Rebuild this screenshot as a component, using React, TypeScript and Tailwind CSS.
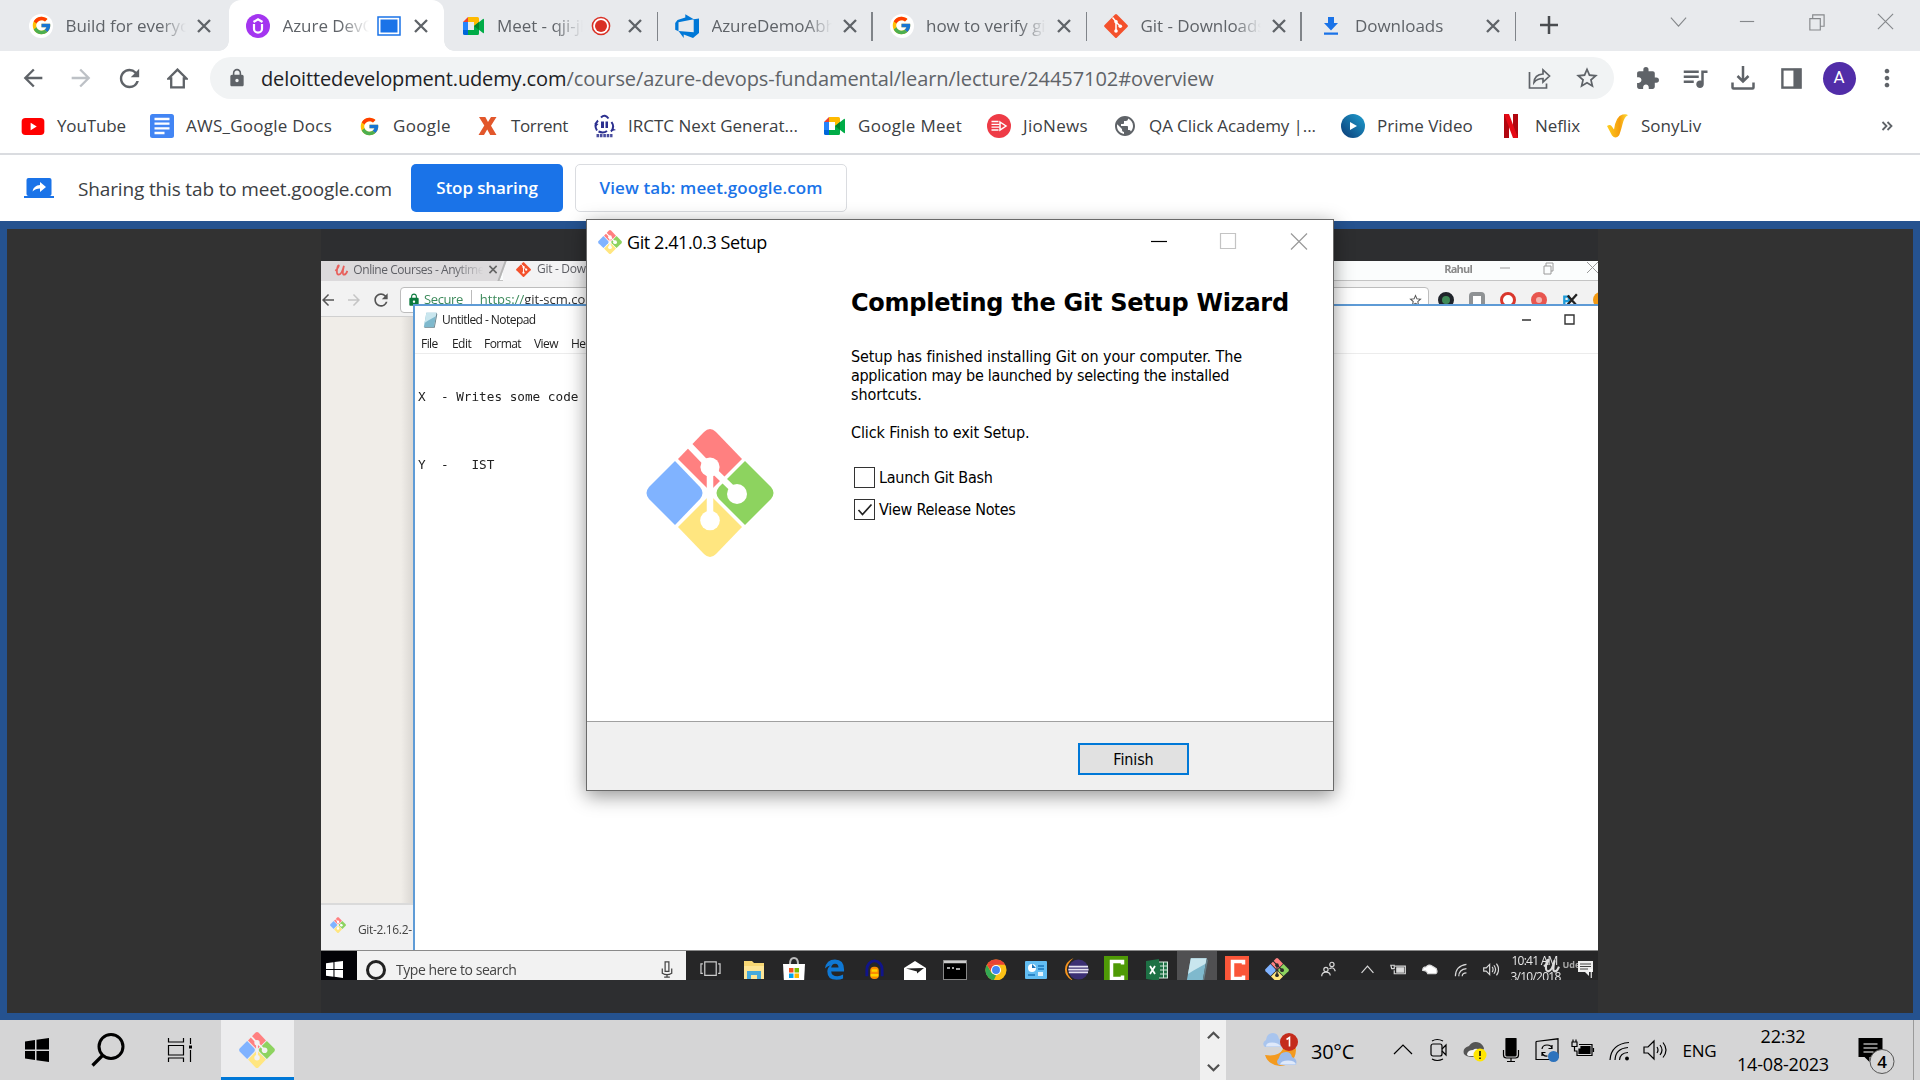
import React from "react";
import { FcGoogle } from "react-icons/fc";
import {
  MdArrowBack, MdArrowForward, MdRefresh, MdLock, MdStarBorder, MdExtension,
  MdQueueMusic, MdPublic, MdMoreVert,
} from "react-icons/md";

type P = { className?: string };

/* ---------- logos ---------- */
const GitSetupLogo = ({ className = "", gap = "#ffffff" }: P & { gap?: string }) => (
  <svg viewBox="0 0 128 128" className={className}>
    <path d="M58 3q6-6 12 0l26 27-32 32L32 30z" fill="#ff8080" />
    <path d="M29 32 3 58q-5 6 0 12l26 26 25-26q5-6 0-12z" fill="#80b3ff" />
    <path d="m99 32 26 26q5 6 0 12L99 96 73 70q-5-6 0-12z" fill="#8dd35f" />
    <path d="M64 66 32 98l26 27q6 6 12 0l26-27z" fill="#ffe680" />
    <path d="m40 13 24 25 27 26M64 38v54" fill="none" stroke={gap} strokeWidth="6.5" />
    <circle cx="64" cy="38" r="9.6" fill={gap} />
    <circle cx="91" cy="65" r="10" fill={gap} />
    <circle cx="64" cy="91.500" r="9.8" fill={gap} />
  </svg>
);
const GitIcon = ({ className = "" }: P) => (
  <svg viewBox="0 0 24 24" className={className}>
    <path d="M11 .6q1-1 2 0L23.400 11q1 1 0 2L13 23.400q-1 1-2 0L.6 13q-1-1 0-2z" fill="#f4512c" />
    <path d="m8.500 3.500 3.500 4v10M12 8l4 4" stroke="#fff" strokeWidth="1.500" fill="none" />
    <circle cx="12" cy="7.800" r="1.800" fill="#fff" /><circle cx="12" cy="17" r="1.800" fill="#fff" /><circle cx="16.300" cy="12.300" r="1.800" fill="#fff" />
  </svg>
);
const MeetIcon = () => (
  <svg viewBox="0 0 24 20" className="h-5 w-6">
    <path d="M7 1v5H2z" fill="#ea4335" /><path d="M7 1h9.500q1.500 0 1.500 1.500V8l-5 2V6H7z" fill="#ffba00" />
    <path d="M2 6h5v8H2z" fill="#2684fc" /><path d="M2 14h5v5H3.500Q2 19 2 17.500z" fill="#0066da" />
    <path d="M7 14h6v-4l5-1v8.500q0 1.500-1.500 1.500H7z" fill="#00ac47" />
    <path d="M13 10l9-7q1-.6 1 .6v12.800q0 1.200-1 .6z" fill="#00ac47" />
    <path d="M13 10 18 6v8z" fill="#00832d" />
  </svg>
);
const UdemyIcon = () => (
  <svg viewBox="0 0 24 24" className="size-6">
    <circle cx="12" cy="12" r="12" fill="#a435f0" />
    <path d="M8 10v5a4 3.600 0 0 0 8 0v-5M7.500 8 12 5.300 16.500 8" fill="none" stroke="#fff" strokeWidth="2.200" />
  </svg>
);
const AzureIcon = () => (
  <svg viewBox="0 0 24 24" className="size-6">
    <path d="M24 4.500v14.600L18 24l-9.300-3.400V24l-5.200-6.900 15.200 1.200V5.200zM18.800 5.300 10.300.3v3.300L2.500 5.900.2 8.900v6.800l3.300 1.500V8.300z" fill="#0078d7" />
  </svg>
);
const DownloadFav = () => (
  <svg viewBox="0 0 24 24" className="size-6">
    <path d="M9 3h6v6h4l-7 7.500L5 9h4zM5 18.500h14v2.200H5z" fill="#1a73e8" />
  </svg>
);
const GoogleRound = () => (
  <span className="flex size-6 items-center justify-center rounded-full bg-white"><FcGoogle className="size-[21px]" /></span>
);
const YoutubeIcon = () => (
  <svg viewBox="0 0 24 18" className="h-[17px] w-6"><rect width="24" height="18" rx="4" fill="#f00" /><path d="m9.500 5 6.500 4-6.500 4z" fill="#fff" /></svg>
);
const DocsIcon = () => (
  <svg viewBox="0 0 24 24" className="size-6"><rect width="24" height="24" rx="2.500" fill="#4285f4" /><path d="M4.500 5h15M4.500 9.700h15M4.500 14.400h15M4.500 19h10" stroke="#fff" strokeWidth="2.300" /></svg>
);
const TorrentIcon = () => (
  <svg viewBox="0 0 24 24" className="size-6"><path d="M4 3h6.300l2.700 5 3-5h5.500l-5.500 8.800L21.500 21h-6.300l-3-5.500L9 21H3.500l5.800-9.500z" fill="#e2572b" /></svg>
);
const IrctcIcon = () => (
  <svg viewBox="0 0 24 24" className="size-6">
    <path d="M9 3.500q4-4 7.500 1M6 6.500Q1.500 11 5 16.500M19.500 8q3.500 5-.5 9.500M6.500 17.500q5 2 8.500-.5" fill="none" stroke="#2b2f8f" strokeWidth="2" />
    <path d="M4 12.500 2.500 9l4 1zM20 17l4-1-4-2z" fill="#2b2f8f" />
    <path d="M9 7.500h3v6.500H9zM13.500 7.500H16v6.500h-2.500z" fill="#2b2f8f" />
    <path d="M4.500 21.700h16" stroke="#2b2f8f" strokeWidth="3.200" strokeDasharray="2.600 .8" opacity=".85" />
  </svg>
);
const JioIcon = () => (
  <svg viewBox="0 0 24 24" className="size-6"><circle cx="12" cy="12" r="12" fill="#ee3b46" /><path d="M4.500 7.500h7M4.500 10.300h8M4.500 13.200h8M4.500 16h7" stroke="#fff" strokeWidth="1.300" /><path d="m13 8 6 4-6 4z" fill="none" stroke="#fff" strokeWidth="1.500" /></svg>
);
const PrimeIcon = () => (
  <svg viewBox="0 0 24 24" className="size-6">
    <defs><linearGradient id="pv" x1="1" y1="0" x2="0" y2="1"><stop offset="0" stopColor="#1f9fd0" /><stop offset="1" stopColor="#0b3a75" /></linearGradient></defs>
    <circle cx="12" cy="12" r="12" fill="url(#pv)" /><path d="m9 8 7 4-7 4z" fill="#fff" />
  </svg>
);
const NetflixIcon = () => (
  <svg viewBox="0 0 24 24" className="size-6"><path d="M5 0h5v24H5zM14 0h5v24h-5z" fill="#b1060f" /><path d="M5 0h5l9 24h-5z" fill="#e50914" /></svg>
);
const SonyIcon = () => (
  <svg viewBox="0 0 24 24" className="size-6">
    <defs><linearGradient id="sl" x1="0" y1="0" x2="1" y2="0"><stop offset="0" stopColor="#ffcf1f" /><stop offset=".6" stopColor="#f59d0c" /><stop offset="1" stopColor="#ffe23a" /></linearGradient></defs>
    <path d="M2 12q3-2 4.500 0l2.500 3.500Q11 2 17.500.5q4.500-.8 5.500.7-3.500 1-5.500 9T14 21.500q-3.500 4-7 0z" fill="url(#sl)" />
  </svg>
);

/* ---------- browser chrome ---------- */
const CloseX = () => (
  <svg viewBox="0 0 18 18" className="size-[18px] shrink-0"><path d="m3 3 12 12M15 3 3 15" stroke="#5f6368" strokeWidth="2.300" /></svg>
);
const TabSharing = () => (
  <svg viewBox="0 0 24 20" className="h-5 w-6 shrink-0"><rect x="1" y="1" width="22" height="18" fill="#fff" stroke="#1a73e8" strokeWidth="1.500" /><rect x="3.500" y="3.500" width="17" height="13" fill="#1a73e8" /></svg>
);
const Recording = () => (
  <svg viewBox="0 0 20 20" className="mr-1 size-5 shrink-0"><circle cx="10" cy="10" r="8.600" fill="#fff" stroke="#d93025" strokeWidth="1.500" /><circle cx="10" cy="10" r="6" fill="#d93025" /></svg>
);

type TabT = { icon: React.ReactNode; title: string; active?: boolean; media?: React.ReactNode; sep?: boolean };
const tabs: TabT[] = [
  { icon: <GoogleRound />, title: "Build for everyone" },
  { icon: <UdemyIcon />, title: "Azure DevOps", active: true, media: <TabSharing /> },
  { icon: <MeetIcon />, title: "Meet - qji-jhqn", media: <Recording />, sep: true },
  { icon: <AzureIcon />, title: "AzureDemoAbhi", sep: true },
  { icon: <GoogleRound />, title: "how to verify git", sep: true },
  { icon: <GitIcon className="size-6" />, title: "Git - Downloads", sep: true },
  { icon: <DownloadFav />, title: "Downloads", sep: true },
];

function Tab({ icon, title, active, media, sep }: TabT) {
  return (
    <div className={"relative flex h-[51px] w-[214.500px] shrink-0 items-center first:w-[216px] first:pl-4 pl-[17px] " + (active ? "rounded-t-[12px] bg-white" : "")}>
      {active && (
        <>
          <span className="absolute bottom-0 -left-[10px] size-[10px] bg-[radial-gradient(circle_at_0_0,transparent_9.500px,white_10px)]" />
          <span className="absolute -right-[10px] bottom-0 size-[10px] bg-[radial-gradient(circle_at_100%_0,transparent_9.500px,white_10px)]" />
        </>
      )}
      <span className="flex w-6 shrink-0 justify-center">{icon}</span>
      <span className={
        "ml-[12.500px] shrink-0 overflow-hidden text-[17px] leading-6 tracking-[-0.05px] whitespace-nowrap text-[#5f6368] " +
        (media ? "w-[86px] [mask-image:linear-gradient(to_right,black_66%,transparent)]" : "w-[120px] [mask-image:linear-gradient(to_right,black_78%,transparent)]")
      }>{title}</span>
      {media && <span className="ml-[8px] flex w-6 shrink-0 justify-center">{media}</span>}
      <span className={media ? "ml-[11px]" : "ml-[9px]"}><CloseX /></span>
      {sep && <span className="absolute top-3 right-0 h-[29px] w-[1.500px] bg-[#808489]" />}
    </div>
  );
}

function TabStrip() {
  return (
    <div className="flex h-[51px] shrink-0 bg-[#e8eaed] pl-[13px]">
      {tabs.map((t) => <Tab key={t.title} {...t} />)}
      <svg viewBox="0 0 20 20" className="mt-[15px] ml-[23px] size-5"><path d="M10 1v18M1 10h18" stroke="#494c50" strokeWidth="2.500" /></svg>
      <div className="ml-auto flex h-[43px] w-[276px] items-center">
        {["m2 6 8 9 8-9", "M2 10h15", "M3 7h11v12H3zM6 7V3h12v12h-4", "m2 2 16 16M18 2 2 18"].map((d) => (
          <span key={d} className="flex w-[69px] shrink-0 justify-center">
            <svg viewBox="0 0 20 20" className="size-[19px]"><path d={d} stroke="#85888b" strokeWidth="1.200" fill="none" /></svg>
          </span>
        ))}
      </div>
    </div>
  );
}

const Slot = ({ children }: { children: React.ReactNode }) => (
  <span className="flex w-12 shrink-0 items-center justify-center text-[#5f6368]">{children}</span>
);

function Toolbar() {
  return (
    <div className="flex h-[54px] shrink-0 items-center bg-white pl-[9px]">
      <Slot><MdArrowBack className="size-[28px]" /></Slot>
      <Slot><MdArrowForward className="size-[28px] text-[#bdc1c6]" /></Slot>
      <Slot><MdRefresh className="size-[29px]" /></Slot>
      <Slot><svg viewBox="0 0 20 20" className="size-[21px]"><path d="M10 1.500 1.500 10H4v8.500h12V10h2.500z" stroke="#5f6368" strokeWidth="2.200" fill="none" /></svg></Slot>
      <div className="ml-[9px] flex h-[42px] w-[1404px] shrink-0 items-center rounded-full bg-[#f1f3f4] pl-[17px]">
        <MdLock className="size-[20px] text-[#5f6368]" />
        <span className="mt-[2px] ml-[14px] text-[20px] leading-6 tracking-[-0.07px] whitespace-nowrap text-[#5f6368]">
          <span className="tracking-[-0.13px] text-[#202124]">deloittedevelopment.udemy.com</span>/course/azure-devops-fundamental/learn/lecture/24457102#overview
        </span>
        <span className="mr-[3px] ml-auto flex">
          <Slot><svg viewBox="0 0 24 24" className="size-6"><path d="M2.500 6v16h17v-4.500M7 16.500q.5-8 9-8.500V4l6.500 6-6.500 6v-3.500q-6 0-9 4z" stroke="#5f6368" strokeWidth="1.700" fill="none" /></svg></Slot>
          <Slot><MdStarBorder className="size-[26px]" /></Slot>
        </span>
      </div>
      <span className="ml-[9px] flex">
        <Slot><MdExtension className="size-[25px]" /></Slot>
        <Slot><MdQueueMusic className="size-[30px]" /></Slot>
        <Slot><svg viewBox="0 0 24 24" className="size-6"><path d="M12 0v15M6.500 10l5.500 5.500 5.500-5.500M1.500 16.500v5q0 1 1 1h19q1 0 1-1v-5" stroke="#5f6368" strokeWidth="2.500" fill="none" /></svg></Slot>
        <Slot><svg viewBox="0 0 24 24" className="size-[23px]"><rect x="2.500" y="2.500" width="19" height="19" stroke="#5f6368" strokeWidth="2.500" fill="none" /><path d="M14 2h8v20h-8z" fill="#5f6368" /></svg></Slot>
        <Slot><span className="flex size-[33px] items-center justify-center rounded-full bg-[#512da8] font-[Roboto] text-[17px] text-white">A</span></Slot>
        <Slot><MdMoreVert className="size-[28px]" /></Slot>
      </span>
    </div>
  );
}

const bookmarks = [
  { i: <YoutubeIcon />, t: "YouTube", w: "w-[129px]", k: "tracking-[-0.13px]" },
  { i: <DocsIcon />, t: "AWS_Google Docs", w: "w-[207px]", k: "tracking-[0.25px]" },
  { i: <FcGoogle className="size-[21px]" />, t: "Google", w: "w-[118px]", k: "tracking-[0.35px]" },
  { i: <TorrentIcon />, t: "Torrent", w: "w-[117px]", k: "tracking-[-0.36px]" },
  { i: <IrctcIcon />, t: "IRCTC Next Generat...", w: "w-[230px]", k: "" },
  { i: <MeetIcon />, t: "Google Meet", w: "w-[165px]", k: "tracking-[0.3px]" },
  { i: <JioIcon />, t: "JioNews", w: "w-[126px]", k: "tracking-[0.33px]" },
  { i: <MdPublic className="size-[26px] text-[#5f6368]" />, t: "QA Click Academy |...", w: "w-[228px]", k: "tracking-[-0.09px]" },
  { i: <PrimeIcon />, t: "Prime Video", w: "w-[158px]", k: "" },
  { i: <NetflixIcon />, t: "Neflix", w: "w-[106px]", k: "tracking-[-0.09px]" },
  { i: <SonyIcon />, t: "SonyLiv", w: "w-[110px]", k: "" },
];

function Bookmarks() {
  return (
    <div className="flex h-[50px] shrink-0 items-start border-b-2 border-[#dadce0] bg-white pt-[9px] pl-[21px]">
      {bookmarks.map((b) => (
        <div key={b.t} className={"flex h-6 shrink-0 items-center " + b.w}>
          <span className="flex w-6 shrink-0 justify-center">{b.i}</span>
          <span className={"ml-3 text-[17px] leading-6 whitespace-nowrap text-[#3c4043] " + b.k}>{b.t}</span>
        </div>
      ))}
      <svg viewBox="0 0 12 12" className="mt-[6px] mr-[27px] ml-auto size-3"><path d="m1.500 2 4 4-4 4M6.500 2l4 4-4 4" stroke="#5f6368" strokeWidth="1.800" fill="none" /></svg>
    </div>
  );
}

function ShareBar() {
  return (
    <div className="flex h-[66px] shrink-0 items-center bg-white pl-6">
      <svg viewBox="0 0 30 20" className="h-5 w-[30px]"><rect x="2.500" width="25" height="18" rx="2" fill="#1a73e8" /><path d="M0 18h30v2H0z" fill="#1a73e8" /><path d="M8.500 13.500q1-6 7.500-6.500V4l6 5-6 5v-3.500q-4.500 0-7.500 3z" fill="#fff" /></svg>
      <span className="mt-[2px] ml-6 w-[333px] text-[19px] leading-6 tracking-[-0.15px] whitespace-nowrap text-[#3c4043]">Sharing this tab to meet.google.com</span>
      <button className="h-12 w-[152px] shrink-0 rounded-[5px] bg-[#1a73e8] text-[17px] font-semibold tracking-[-0.1px] text-white">Stop sharing</button>
      <button className="ml-3 h-12 w-[272px] shrink-0 rounded-[5px] border border-[#dadce0] text-[17px] font-semibold tracking-[0.09px] text-[#1a73e8]">View tab: meet.google.com</button>
    </div>
  );
}

/* ---------- shared lecture video ---------- */
const NotepadIcon = ({ className = "" }: P) => (
  <svg viewBox="0 0 22 22" className={className}><path d="M6 1h14l-3.500 19.500H2.500z" fill="#7fb9cd" /><path d="M6 1h14l-1 5L8 12l-4.500 3z" fill="#c9e6ee" /><path d="m20 1 1 2-3.500 18.500H4l-1.500-1h14z" fill="#66808a" /></svg>
);
const Camtasia = ({ fill }: { fill: string }) => (
  <svg viewBox="0 0 24 28" className="h-[28px] w-6"><rect width="24" height="28" fill={fill} /><path d="M18.500 8.500V5.500h-11v17h11v-3" stroke="#fff" strokeWidth="3.500" fill="none" /></svg>
);
const UdemyMark = ({ className = "", color }: P & { color: string }) => (
  <svg viewBox="0 0 16 14" className={className}><path d="M1 8Q5 4 5 1.800 3.500 1 2.800 8 2.500 12.500 5 12.500 8.500 12 11 2 8.500 12.500 11 12.500q2.500 0 4-4.500" stroke={color} strokeWidth="2" fill="none" /></svg>
);

const videoApps: { n: string; i: React.ReactNode; on?: boolean }[] = [
  { n: "explorer", i: <svg viewBox="0 0 22 20" className="w-[22px]"><path d="M1 1h8l2 2h10v16H1z" fill="#f7d774" /><path d="M1 6h20v13H1z" fill="#fde596" /><path d="M4 19v-8h14v8h-4v-4H8v4z" fill="#45a9dc" /></svg> },
  { n: "store", i: <svg viewBox="0 0 24 26" className="w-6"><path d="M8 7q0-6 4-6t4 6" stroke="#bbb" strokeWidth="2" fill="none" /><path d="M1 7h22l-1 18H2z" fill="#fff" /><path d="M7 11h4.500v4.500H7z" fill="#f25022" /><path d="M12.500 11H17v4.500h-4.500z" fill="#7fba00" /><path d="M7 16.500h4.500V21H7z" fill="#00a4ef" /><path d="M12.500 16.500H17V21h-4.500z" fill="#ffb900" /></svg> },
  { n: "edge", i: <svg viewBox="0 0 22 22" className="w-[21px]"><path d="M1 10Q2.500.5 11.500.5 21 .5 21 11v2H7.500q.5 5 6.500 5 3 0 6-1.700v4Q17.500 21.700 13 21.700 3.500 21.700 3.500 13 3.500 9 7 6.500 3.500 7.500 1 10zM7.500 9h7.700q0-4-3.600-4-3.400 0-4.100 4z" fill="#0f78d4" /></svg> },
  { n: "audacity", i: <svg viewBox="0 0 22 22" className="w-[21px]"><path d="M3 18v-7a8 9 0 0 1 16 0v7" stroke="#10148a" strokeWidth="3" fill="none" /><rect x="6.500" y="8" width="9" height="13" rx="4" fill="#fb8c00" /><path d="M8 12h6M7 17h8" stroke="#ffd400" strokeWidth="2.500" /></svg> },
  { n: "mail", i: <svg viewBox="0 0 24 20" className="w-6"><path d="M1 8 12 1l11 7v12H1z" fill="#fff" /><path d="m3 8.500 18-.5-7 5.500v-2z" fill="#222" /></svg> },
  { n: "cmd", i: <svg viewBox="0 0 24 20" className="w-6"><rect x=".5" y=".5" width="23" height="19" fill="#000" stroke="#888" /><path d="M1 2h22" stroke="#ccc" strokeWidth="2.500" /><path d="M4 8h3M9 8h2M13 9h4" stroke="#ddd" strokeWidth="1.300" /></svg> },
  { n: "chrome", i: <svg viewBox="0 0 24 24" className="w-[22px]"><circle cx="12" cy="12" r="11.500" fill="#fbc116" /><path d="M2 6.200A11.500 11.500 0 0 1 22 6.300H12z" fill="#ea4335" /><path d="M2 6.200 7 15l5 3-2.500 5.300A11.500 11.500 0 0 1 2 6.200z" fill="#34a853" /><path d="M2 6.200 12 6l-5 8z" fill="#ea4335" /><circle cx="12" cy="12" r="5.500" fill="#fff" /><circle cx="12" cy="12" r="4.300" fill="#4285f4" /></svg> },
  { n: "panel", i: <svg viewBox="0 0 22 18" className="w-[22px]"><rect width="22" height="18" rx="1" fill="#62bdf2" /><circle cx="7" cy="7" r="4" fill="#fff" /><path d="M7 3v4h4z" fill="#1b75bb" /><path d="M13 5h6M13 8h6M3 14h7" stroke="#1b75bb" strokeWidth="1.500" /><path d="M13 11h5v4h-5z" fill="#e3f3fc" /></svg> },
  { n: "eclipse", i: <svg viewBox="0 0 26 24" className="w-[25px]"><path d="M10 0Q1 4 1 12t9 12Q3 18 3 12t7-12z" fill="#f7941e" /><circle cx="15" cy="12" r="10.500" fill="#3b2f73" /><path d="M5 9h20M4.500 12h21M5 15h20" stroke="#e6e2f2" strokeWidth="1.800" /></svg> },
  { n: "camtasia", i: <Camtasia fill="#4f9a06" /> },
  { n: "excel", i: <svg viewBox="0 0 22 22" className="w-[22px]"><path d="M0 2 13 0v22L0 20z" fill="#1e7145" /><path d="M13 3h8.500v16H13" stroke="#d5e8dc" fill="#1e7145" strokeWidth="1.200" /><path d="M14 7h7M14 11h7M14 15h7M17.500 3v16" stroke="#d5e8dc" /><path d="m4 7 5 8M9 7l-5 8" stroke="#fff" strokeWidth="1.800" /></svg> },
  { n: "notepad", i: <NotepadIcon className="w-[25px]" />, on: true },
  { n: "recorder", i: <Camtasia fill="#fa5639" /> },
  { n: "git", i: <GitSetupLogo className="w-[24px]" gap="#2a2a2a" /> },
];

const videoTray: [string, React.ReactNode, string][] = [
  ["people", <g key="g"><circle cx="14" cy="4" r="2.500" /><circle cx="7" cy="10" r="2.500" /><path d="M2 18q0-5 5-5t5 4M11 9q5-3 7 3" /></g>, "w-[54px] pl-[8px]"],
  ["caret", <path key="g" d="m3 14 7-8 7 8" />, "w-[31px]"],
  ["power", <g key="g"><path d="M6 6h12v9H5v-4M1 5h4v4H2z" /><path d="M8 8h8v5H8z" fill="#ddd" /></g>, "w-[31px]"],
  ["cloud", <path key="g" d="M2 11q0-4 4-4 3-4 7-1l5 3q2 5-1 6H8q-1-4-6-4z" fill="#fff" />, "w-[31px]"],
  ["wifi", <path key="g" d="M4 18Q4 6 17 4M8 18q0-8 9-9M12 18q0-4 5-4" />, "w-[31px]"],
  ["sound", <path key="g" d="M2 8h3l4-4v12l-4-4H2zM12 7q2 3 0 6M14 5q4 5 0 10M17 3q5 7 0 14" />, "w-[35px] pr-[6px]"],
];

function Video() {
  return (
    <div className="relative flex h-[719px] w-[1277px] flex-col overflow-hidden bg-[#f0eeea] font-medium blur-[0.4px]">
      <div className="flex h-[20px] shrink-0 items-center border-b border-[#c4c4c4] bg-[#fbfdfd] text-[12px] text-[#5f6066]">
        <div className="-ml-1 flex h-5 w-[186px] shrink-0 -skew-x-[20deg] items-center border-r-2 border-[#b5b5b5] bg-[#dcdadc] pb-[3px] pl-[17px]">
          <UdemyMark className="h-3 w-3.5 skew-x-[20deg]" color="#e8605c" />
          <span className="ml-[5px] w-[134px] skew-x-[20deg] overflow-hidden tracking-[-0.45px] whitespace-nowrap [mask-image:linear-gradient(to_right,black_75%,transparent_97%)]">Online Courses - Anytime</span>
          <svg viewBox="0 0 10 10" className="ml-px size-[9px] shrink-0 skew-x-[20deg]"><path d="m1 1 8 8M9 1 1 9" stroke="#666" strokeWidth="1.800" /></svg>
        </div>
        <div className="flex h-5 w-[340px] shrink-0 items-center bg-[#f3f3f4] pb-[3px] pl-[13px]">
          <GitIcon className="size-[15px]" />
          <span className="ml-[6px] tracking-[-0.3px]">Git - Downloads</span>
        </div>
        <span className="ml-auto pb-[3px] text-[11px] font-bold tracking-[-0.8px] text-[#8a8a8a]">Rahul</span>
        <svg viewBox="0 0 126 20" className="h-5 w-[126px]"><path d="M28 7h10M72 5h7v8h-7zM74 5V2h7v8h-2M115 1l11 11M126 1l-11 11" stroke="#9a9a9a" fill="none" /></svg>
      </div>
      <div className="flex h-[36px] shrink-0 items-start border-b border-[#d0d0d0] bg-[#f2f2f2]">
        <div className="flex w-[79px] shrink-0 items-center pt-[9px] text-[#555]">
          <MdArrowBack className="-ml-[2px] size-[18px] shrink-0" /><MdArrowForward className="ml-[8px] size-[18px] shrink-0 text-[#c5c5c5]" /><MdRefresh className="ml-[8px] size-[20px] shrink-0" />
        </div>
        <div className="mt-[6px] flex h-[26px] w-[1029px] shrink-0 items-center rounded-sm border border-[#bdbdbd] bg-white pl-[6px] text-[13px] text-[#3c8a5b]">
          <MdLock className="size-[14px] text-[#0b7a3e]" />
          <span className="ml-[3px] tracking-[-0.4px]">Secure</span>
          <span className="mx-[8px] h-5 w-px bg-[#bbb]" />
          <span>https://<span className="text-[#333]">git-scm.com</span></span>
          <MdStarBorder className="mr-[5px] ml-auto size-[15px] text-[#555]" />
        </div>
        <div className="mt-[11px] ml-[9px] flex shrink-0 gap-[15px]">
          <span className="size-4 rounded-full border-4 border-[#20242b] bg-[#3f8a57]" />
          <span className="size-4 rounded-sm border-4 border-[#8f9294] bg-white" />
          <span className="size-4 rounded-full border-[3px] border-[#d9372c] bg-white" />
          <span className="size-4 rounded-full border-[5px] border-[#e8564f] bg-[#f6b5b1]" />
          <svg viewBox="0 0 14 14" className="size-4"><path d="M2 13V4h4v4H2" stroke="#1d9bd8" strokeWidth="2" fill="none" /><path d="m5 3 7 8M13 2 5 11" stroke="#222" strokeWidth="2" /></svg>
          <span className="size-4 shrink-0 rounded-full bg-[#f39a14]" />
        </div>
      </div>
      <div className="min-h-0 flex-1 bg-[linear-gradient(to_right,#f0ede8_80px,#d9d6d2_93px)]" />
      <div className="flex h-[47px] w-[93px] shrink-0 items-center overflow-hidden border-t-2 border-[#dadada] bg-[#f1f1f2] pl-[9px] text-[12px]">
        <GitSetupLogo className="mb-[6px] size-[16px] shrink-0" />
        <span className="mt-[5px] ml-[12px] tracking-[-0.35px] whitespace-nowrap text-[#444]">Git-2.16.2-</span>
      </div>
      <div className="flex h-[30px] shrink-0 items-center overflow-hidden border-t border-[#8a8a8a] bg-[#262627]">
        <div className="flex h-full w-9 shrink-0 items-center bg-[#020206] pt-[8px] pl-[5px]">
          <svg viewBox="0 0 16 16" className="size-[17px]"><path d="M0 2.200 7 1.200v6.300H0zM8 1l8-1v7.500H8zM0 8.500h7v6.300l-7-1zM8 8.500h8V16l-8-1.200z" fill="#fff" /></svg>
        </div>
        <div className="flex h-full w-[329px] shrink-0 items-center bg-[#f2f2f2] pt-[8px]">
          <span className="ml-[9px] size-[20px] rounded-full border-[3px] border-[#222]" />
          <span className="ml-[10px] text-[14px] leading-none tracking-[-0.45px] text-[#444]">Type here to search</span>
          <svg viewBox="0 0 12 18" className="mr-[13px] ml-auto h-[17px] w-3"><path d="M4 1h4v10H4zM1 8v5q5 3 10 0V8M6 14v3M3 17h6" stroke="#444" strokeWidth="1.300" fill="none" /></svg>
        </div>
        <div className="flex h-full w-[48px] shrink-0 items-center justify-center pt-[7px]">
          <svg viewBox="0 0 22 16" className="w-[21px]"><path d="M5 1h12v14H5zM3 3H1v10h2M19 3h2v10h-2" stroke="#ccc" strokeWidth="1.300" fill="none" /></svg>
        </div>
        {videoApps.map((a) => (
          <div key={a.n} className={"flex h-full w-[40.250px] shrink-0 items-center justify-center pt-[8px] " + (a.on ? "bg-[#505052]" : "")}>{a.i}</div>
        ))}
        {videoTray.map(([n, g, w]) => (
          <div key={n} className={"flex h-full shrink-0 items-center justify-center pt-[8px] " + w}>
            <svg viewBox="0 0 20 20" className="size-[17px] shrink-0" stroke="#d8d8d8" strokeWidth="1.400" fill="none">{g}</svg>
          </div>
        ))}
        <div className="relative h-full w-[66px] shrink-0 text-[12px] leading-[16px] tracking-[-0.76px] whitespace-nowrap text-[#e8e8e8]">
          <div className="pt-[2px] pl-px">10:41 AM</div><div>3/10/2018</div>
          <div className="absolute top-[6px] left-[32px] flex items-center gap-[3px] text-[#a8a8a8]">
            <UdemyMark className="h-[15px] w-[17px]" color="#dcdcdc" />
            <span className="text-[9px] font-bold tracking-normal">Ude</span>
          </div>
        </div>
        <div className="relative mt-[6px] flex items-center text-white">
          <svg viewBox="0 0 18 18" className="size-[18px]"><path d="M1 1h15v11h-4v4l-4-4H1z" fill="#eee" /><path d="M3 4h11M3 6.500h11M3 9h8" stroke="#444" /></svg>
          <span className="absolute top-[8px] left-[11px] text-[12px] leading-none">1</span>
        </div>
      </div>

      {/* Notepad window floating over the recorded desktop */}
      <div className="absolute top-[43px] left-[92px] flex h-[646px] w-[1190px] flex-col border-t-2 border-l-2 border-[#5e9bd6] bg-white">
        <div className="flex h-[28px] shrink-0 items-center pl-[7px]">
          <NotepadIcon className="size-4" />
          <span className="ml-[4px] text-[12px] tracking-[-0.55px] text-[#222]">Untitled - Notepad</span>
          <svg viewBox="0 0 60 14" className="mr-[22px] ml-auto h-[14px] w-[60px]"><path d="M1 7h9M44 2h9v9h-9z" stroke="#333" strokeWidth="1.400" fill="none" /></svg>
        </div>
        <div className="flex h-[20px] shrink-0 items-center border-b border-[#ececec] pl-[6px] text-[12px] tracking-[-0.55px] text-[#222]">
          <span className="w-[31px]">File</span><span className="w-[32px]">Edit</span><span className="w-[50px]">Format</span><span className="w-[37px]">View</span><span>Help</span>
        </div>
        <pre className="pt-[34px] pl-[3px] font-['DejaVu_Sans_Mono'] text-[12.700px] leading-[17px] text-[#222]">{"X  - Writes some code"}</pre>
        <pre className="pt-[51px] pl-[3px] font-['DejaVu_Sans_Mono'] text-[12.700px] leading-[17px] text-[#222]">{"Y  -   IST"}</pre>
      </div>
    </div>
  );
}

/* ---------- Git installer ---------- */
function GitDialog() {
  return (
    <div className="absolute top-[219px] left-[586px] flex h-[572px] w-[748px] flex-col border border-[#6a6a6a] bg-white font-['DejaVu_Sans_Condensed','DejaVu_Sans',sans-serif] text-black shadow-[0_5px_18px_rgba(0,0,0,0.42)]">
      <div className="flex h-[43px] shrink-0 items-center pl-[11px]">
        <GitSetupLogo className="size-6" />
        <span className="mt-px ml-[5px] font-['Open_Sans',sans-serif] text-[18px] leading-6 tracking-[-0.42px]">Git 2.41.0.3 Setup</span>
        <svg viewBox="0 0 158 18" className="mr-[25px] mb-px ml-auto h-[18px] w-[158px] shrink-0" fill="none" strokeWidth="1.200">
          <path d="M1 9.500h16" stroke="#000" /><path d="M70.500 1.500h15v15h-15z" stroke="#c4c4c4" /><path d="m141 1.500 16 16M157 1.500l-16 16" stroke="#999" />
        </svg>
      </div>
      <div className="flex min-h-0 flex-1">
        <div className="w-[264px] shrink-0 pt-[166px] pl-[59px]"><GitSetupLogo className="size-32" /></div>
        <div className="pt-[25px]">
          <h1 className="font-['DejaVu_Sans',sans-serif] text-[24px] leading-[30px] font-bold tracking-[-0.25px] whitespace-nowrap">Completing the Git Setup Wizard</h1>
          <p className="mt-[29px] w-[410px] text-[16px] leading-[19px] tracking-[-0.1px]">
            Setup has finished installing Git on your computer. The<br /><span className="tracking-[-0.3px]">application may be launched by selecting the installed</span><br />shortcuts.
          </p>
          <p className="mt-[19px] text-[16px] leading-[19px] tracking-[-0.1px]">Click Finish to exit Setup.</p>
          <div className="mt-[25px] flex flex-col gap-[11px] pl-[3px] text-[16px] leading-[20px] tracking-[-0.25px]">
            <label className="flex h-[21px] items-center gap-[4px]"><span className="size-[21px] border-[1.500px] border-[#333]" />Launch Git Bash</label>
            <label className="flex h-[21px] items-center gap-[4px]">
              <span className="flex size-[21px] items-center justify-center border-[1.500px] border-[#333]"><svg viewBox="0 0 16 16" className="size-[16px]"><path d="m1.500 8 4 4.500 9-10" stroke="#222" strokeWidth="1.700" fill="none" /></svg></span>View Release Notes
            </label>
          </div>
        </div>
      </div>
      <div className="flex h-[69px] shrink-0 items-center justify-end border-t border-[#a0a0a0] bg-[#f0f0f0] pt-[6px] pr-[144px]">
        <button className="h-8 w-[111px] border-2 border-[#0078d7] bg-[#e1e1e1] pt-px text-[16px] leading-none tracking-[-0.1px]">Finish</button>
      </div>
    </div>
  );
}

/* ---------- taskbar ---------- */
const trayIcons: [string, React.ReactNode][] = [
  ["caret", <path key="g" d="m3 16 9-9 9 9" />],
  ["camera", <g key="g"><rect x="4" y="6" width="11" height="12" rx="2" /><path d="m15 11 4-4v10l-4-4M5 3q5-3 11 0M5 21q5 3 11 0" /></g>],
  ["cloud", <g key="g" stroke="none"><path d="M1 16q-2-6 5-8Q10 2 17 5q4 3 4 6L10 19q-7 0-9-3z" fill="#555" /><path d="M4 16q1-4 6-4 2-2 5-1l-2 7H7q-3 0-3-2z" fill="#f4f4f4" /><circle cx="17" cy="17" r="6.500" fill="#ffe600" /><path d="M17 13v5M17 19.500v1.500" stroke="#111" strokeWidth="1.600" /></g>],
  ["mic", <g key="g"><rect x="7" y="0" width="10" height="18" rx="1" fill="#000" /><path d="M4.500 12v5q0 3 3 3h9q3 0 3-3v-5M12 20v3.500M8 23.500h8" /></g>],
  ["sync", <g key="g"><path d="M1 3.500 23 .8v19M1 3.500v18h14M7 11q.5-4 5-4t5 3.500M17 7v3.500h-3.500M7 18v-3.500h3.500M7 14.500q1 4 5.500 3.500" /><circle cx="18.500" cy="18.500" r="5.500" fill="#2d73bd" stroke="none" /></g>],
  ["power", <g key="g"><path d="M8 6.500h13v11H6v-4M22.500 10v4M1 4h5v4.500H1zM2 4V1.500M5 4V1.500M3.500 9v4h3" /><path d="M10 8.500h9v7H8V11h2z" fill="#000" /></g>],
  ["wifi", <g key="g"><path d="M3 22Q4 6 22 4.500M8 22Q8.500 10.500 21 9.500M12.500 22q.5-7 8.500-7.500" /><circle cx="20" cy="20.500" r="1.300" fill="#000" /></g>],
  ["sound", <path key="g" d="M1 9h4l6-6v18l-6-6H1zM14 9q2 3 0 6M17 7q4 5 0 10M20 4.500q6 7.500 0 15" />],
];

function Taskbar() {
  return (
    <div className="flex h-[60px] shrink-0 items-center bg-[#d5d5d6] text-black">
      <span className="flex w-[73px] justify-center"><svg viewBox="0 0 24 24" className="size-6"><path d="M0 3.500 10 2v9.500H0zM11.500 1.700 24 0v11.500H11.500zM0 13h10v9L0 20.600zM11.500 13H24v11l-12.500-1.700z" /></svg></span>
      <span className="flex w-[74px] justify-center"><svg viewBox="0 0 34 34" className="mr-[5px] size-[34px]"><circle cx="20" cy="13.500" r="12" fill="none" stroke="#000" strokeWidth="3" /><path d="M11.500 22.500 1.500 32.500" stroke="#000" strokeWidth="3.200" /></svg></span>
      <span className="flex w-[74px] justify-center"><svg viewBox="0 0 26 24" className="mr-[8px] h-6 w-[26px]" fill="none" stroke="#000" strokeWidth="1.200"><path d="M1.500 7.500h15v9.500h-15zM1.500 0v4h15V0M1.500 24v-4h15v4M23.500 0v6M23.500 12v12" /><path d="M22 7.500h3v3h-3z" fill="#000" stroke="none" /></svg></span>
      <span className="flex h-full w-[73px] items-center justify-center border-b-[3px] border-[#0078d7] bg-[#ededee] pt-[3px] pr-[2px]"><GitSetupLogo className="size-9" gap="#f2f2f2" /></span>
      <span className="ml-auto flex h-full w-[26px] flex-col items-center justify-between bg-[#f0f0f0] pt-[9px] pb-[6px]">
        <svg viewBox="0 0 14 14" className="ml-px size-[13px]"><path d="m1 10 6-6 6 6" stroke="#505050" strokeWidth="2.400" fill="none" /></svg>
        <svg viewBox="0 0 14 14" className="ml-px size-[13px]"><path d="m1 4 6 6 6-6" stroke="#505050" strokeWidth="2.400" fill="none" /></svg>
      </span>
      <svg viewBox="0 0 36 34" className="ml-[36px] h-[34px] w-9">
        <path d="M21 4q12 3 13 13-1 15-16 16Q6 32 3 22q14 2 18-6 2-6 0-12z" fill="#f39a1f" />
        <path d="M3 14q-4-4 1-7Q5 0 11 0q5 0 6 6 5 2 2 8z" fill="#a9c5ee" /><path d="M4 13.500q0-4 6-4t9 4z" fill="#dfe9fa" />
        <path d="M17 32q-4-3 0-7 1-6 7-6 5 0 6 5 6 2 4 8z" fill="#9dbbea" /><path d="M18 31.500q1-4 8-4t8 4z" fill="#dfe9fa" />
        <circle cx="27" cy="9" r="9" fill="#c42b1c" /><path d="m24.500 6.500 3-2v9" stroke="#fff" strokeWidth="1.600" fill="none" />
      </svg>
      <span className="ml-[13px] w-[74px] pt-[3px] text-[20px] leading-6 tracking-[-0.26px]">30°C</span>
      {trayIcons.map(([n, g]) => (
        <span key={n} className="flex w-9 shrink-0 justify-center"><svg viewBox="0 0 24 24" className="size-[24px]" fill="none" stroke="#000" strokeWidth="1.200">{g}</svg></span>
      ))}
      <span className="w-[53px] pt-px text-center text-[17px] leading-6 tracking-[-0.2px]">ENG</span>
      <span className="flex h-full w-[114px] flex-col items-center pt-[2px] text-[18px] leading-[28px] tracking-[-0.2px]"><span>22:32</span><span>14-08-2023</span></span>
      <svg viewBox="0 0 72 60" className="h-[60px] w-[73px]">
        <path d="M18 18h24v19H29v5l-5-5h-6z" /><path d="M23 24h14M23 28h14M23 32h10" stroke="#fff" strokeWidth="1.200" />
        <circle cx="41.500" cy="41.500" r="12" fill="#d6d6d7" stroke="#555" /><text x="41.500" y="48" textAnchor="middle" fontSize="17" fontWeight="600">4</text>
      </svg>
      <span className="h-full w-[7px] shrink-0 border-l border-[#9a9a9a]" />
    </div>
  );
}

export default function App() {
  return (
    <div className="relative flex h-[1080px] w-[1920px] flex-col overflow-hidden bg-white font-['Open_Sans','Noto_Sans',sans-serif]">
      <TabStrip />
      <Toolbar />
      <Bookmarks />
      <ShareBar />
      <main className="flex min-h-0 flex-1 border-[7px] border-t-8 border-[#25528f] bg-[#323232] pl-[314px]">
        <div className="flex h-full w-[1277px] items-center bg-[#2d2e30] pb-px"><Video /></div>
      </main>
      <Taskbar />
      <GitDialog />
    </div>
  );
}
